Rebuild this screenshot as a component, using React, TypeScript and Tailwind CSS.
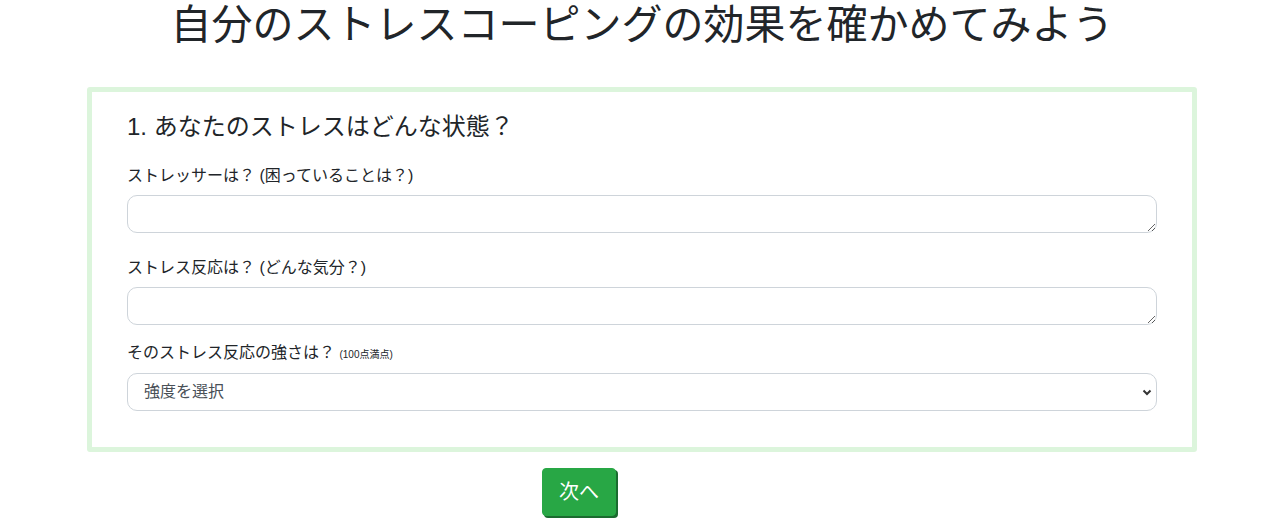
export default function App() {
    const font = { fontFamily: '"Liberation Sans", "Noto Sans CJK JP", sans-serif' };

    return (
        <div className="min-h-[518px] bg-white text-[#212529]" style={font}>
            <div className="mx-auto w-[1110px]">
                <h1 className="mt-[1px] text-center text-[41px] leading-[48px] font-normal">
                    自分のストレスコーピングの効果を確かめてみよう
                </h1>

                <div className="mt-[38px] rounded-[3px] border-[5px] border-[#dcf5dc] bg-white px-[35px] pt-[20px] pb-[36px]">
                    <h3 className="text-[24px] leading-[29px] font-normal">
                        1. あなたのストレスはどんな状態？
                    </h3>

                    <label className="mt-[23px] block text-[16px] leading-[24px]">
                        ストレッサーは？ (困っていることは？)
                    </label>
                    <textarea
                        rows={1}
                        className="mt-[7px] block h-[38px] w-full resize-y rounded-[10px] border border-[#ced4da] px-3 py-1.5 text-[16px] outline-none"
                    />

                    <label className="mt-[23px] block text-[16px] leading-[24px]">
                        ストレス反応は？ (どんな気分？)
                    </label>
                    <textarea
                        rows={1}
                        className="mt-[7px] block h-[38px] w-full resize-y rounded-[10px] border border-[#ced4da] px-3 py-1.5 text-[16px] outline-none"
                    />

                    <label className="mt-[16px] block text-[16px] leading-[24px]">
                        そのストレス反応の強さは？{" "}
                        <span className="text-[10px]">(100点満点)</span>
                    </label>
                    <div className="relative mt-[6px]">
                        <select className="block h-[38px] w-full appearance-none rounded-[10px] border border-[#ced4da] bg-white pl-4 text-[16px] text-[#495057] outline-none">
                            <option>強度を選択</option>
                        </select>
                        <svg
                            className="pointer-events-none absolute top-1/2 right-[5px] h-[10px] w-[10px] -translate-y-1/2 text-[#333]"
                            viewBox="0 0 10 10"
                            fill="none"
                            stroke="currentColor"
                            strokeWidth={2}
                        >
                            <path d="M1.5 3.5 5 7l3.5-3.5" />
                        </svg>
                    </div>
                </div>

                <div className="mt-[16px] pl-[455px]">
                    <button className="rounded-[4px] border border-[#28a745] bg-[#28a745] px-4 py-2 text-[20px] leading-[30px] text-white shadow-[2px_2px_0_#1b6b2f]">
                        次へ
                    </button>
                </div>
            </div>
        </div>
    );
}
